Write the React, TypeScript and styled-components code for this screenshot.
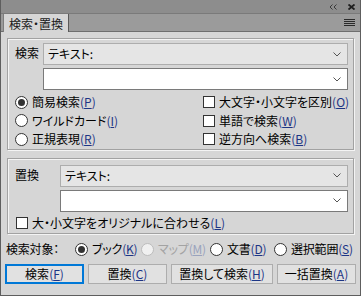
import React from "react";
import styled, { createGlobalStyle } from "styled-components";

const GlobalStyle = createGlobalStyle`
  html, body {
    margin: 0;
    padding: 0;
    background: #d6d6d6;
  }
  body {
    font-family: "Noto Sans CJK JP", "Noto Sans", sans-serif;
    font-size: 12px;
    font-feature-settings: "palt";
    color: #000;
  }
`;

const Panel = styled.div`
  width: 361px;
  height: 296px;
  box-sizing: border-box;
  background: #d6d6d6;
  border-left: 1px solid #5e5e5e;
  border-right: 1px solid #5e5e5e;
  border-bottom: 1px solid #5e5e5e;
  display: flex;
  flex-direction: column;
  overflow: hidden;
`;

const TitleBar = styled.div`
  height: 13px;
  background: #8d8d8d;
  border-bottom: 1px solid #7a7a7a;
  display: flex;
  justify-content: flex-end;
  align-items: center;
  gap: 11px;
  padding-right: 5px;
`;

const TabStrip = styled.div`
  height: 17px;
  background: #9b9b9b;
  border-bottom: 1px solid #6e6e6e;
  display: flex;
  align-items: stretch;
  justify-content: space-between;
  padding: 0 5px 0 2px;
`;

const Tab = styled.div`
  width: 64px;
  margin-bottom: -1px;
  background: #d6d6d6;
  border-left: 1px solid #7d7d7d;
  border-right: 1px solid #5a5a5a;
  display: flex;
  align-items: center;
  justify-content: center;
  font-size: 12px;
  line-height: 17px;
  color: #1a1a1a;
  white-space: nowrap;
`;

const MenuButton = styled.div`
  display: flex;
  align-items: center;
`;

const Body = styled.div`
  padding: 6px 4px 0 4px;
  display: flex;
  flex-direction: column;
`;

const GroupBox = styled.div<{ $top: number; $pad: string }>`
  margin: ${(p) => p.$top}px 2px 0 2px;
  border: 1px solid #a2a2a2;
  box-shadow: inset 1px 1px 0 #f4f4f4, 1px 1px 0 #f4f4f4;
  padding: ${(p) => p.$pad};
`;

const FieldGrid = styled.div<{ $label: number }>`
  display: grid;
  grid-template-columns: ${(p) => p.$label}px 1fr;
  row-gap: 3px;
  padding-right: 5px;
`;

const GroupLabel = styled.div`
  padding-left: 7px;
  line-height: 18px;
  margin-top: 1px;
`;

const Field = styled.div<{ $white?: boolean }>`
  height: 22px;
  box-sizing: border-box;
  border: 1px solid ${(p) => (p.$white ? "#7a7a7a" : "#adadad")};
  background: ${(p) => (p.$white ? "#ffffff" : "#e5e5e5")};
  display: flex;
  align-items: center;
  justify-content: space-between;
  padding: 0 6px 0 4px;
  line-height: 20px;
`;

const Options = styled.div`
  display: grid;
  grid-template-columns: 188px 1fr;
  grid-auto-flow: column;
  grid-template-rows: repeat(3, 18.5px);
  margin-top: 3px;
  padding-left: 7px;
`;

const SingleOption = styled.div`
  display: flex;
  margin-top: 2px;
  padding-left: 8px;
`;

const OptionRow = styled.label<{ $disabled?: boolean }>`
  display: flex;
  align-items: center;
  gap: 4px;
  height: 18.5px;
  white-space: nowrap;
  line-height: 18px;
  color: ${(p) => (p.$disabled ? "#a3a3a3" : "#000")};
`;

const RadioMark = styled.span<{ $checked?: boolean; $disabled?: boolean }>`
  width: 13px;
  height: 13px;
  box-sizing: border-box;
  border-radius: 50%;
  border: 1px solid ${(p) => (p.$disabled ? "#bcbcbc" : "#333")};
  background: ${(p) => (p.$disabled ? "#f0f0f0" : "#fff")};
  display: flex;
  align-items: center;
  justify-content: center;
  flex: none;

  &::after {
    content: "";
    width: 7px;
    height: 7px;
    border-radius: 50%;
    background: #333;
    display: ${(p) => (p.$checked ? "block" : "none")};
  }
`;

const CheckMark = styled.span`
  width: 12px;
  height: 12px;
  box-sizing: border-box;
  border: 1px solid #333;
  background: #fff;
  flex: none;
`;

const Key = styled.span<{ $disabled?: boolean }>`
  color: ${(p) => (p.$disabled ? "#9aa3bd" : "#1d3585")};
  u {
    text-underline-offset: 1px;
  }
`;

const TargetRow = styled.div`
  display: grid;
  grid-template-columns: 70px 66px 69px 64px auto;
  align-items: center;
  height: 18px;
  margin-top: 6px;
  letter-spacing: -0.2px;
`;

const TargetLabel = styled.div`
  margin-left: 1px;
  line-height: 18px;
  white-space: nowrap;
`;

const ButtonRow = styled.div`
  display: grid;
  grid-template-columns: 79px 79px 102px 79px;
  column-gap: 4px;
  margin-top: 6px;
`;

const ActionButton = styled.div<{ $focused?: boolean }>`
  height: 20px;
  box-sizing: border-box;
  background: #e1e1e1;
  border: ${(p) => (p.$focused ? "2px solid #0078d7" : "1px solid #adadad")};
  display: flex;
  align-items: center;
  justify-content: center;
  line-height: 18px;
  white-space: nowrap;
`;

const Chevron = () => (
  <svg width="8" height="5" viewBox="0 0 8 5">
    <path d="M0.5 0.5 L4 4 L7.5 0.5" fill="none" stroke="#555" strokeWidth="1" />
  </svg>
);

const Mn = ({ k, disabled }: { k: string; disabled?: boolean }) => (
  <Key $disabled={disabled}>
    (<u>{k}</u>)
  </Key>
);

const Radio = ({
  label,
  k,
  checked,
  disabled,
}: {
  label: string;
  k: string;
  checked?: boolean;
  disabled?: boolean;
}) => (
  <OptionRow $disabled={disabled}>
    <RadioMark $checked={checked} $disabled={disabled} />
    <span>
      {label}
      <Mn k={k} disabled={disabled} />
    </span>
  </OptionRow>
);

const Check = ({ label, k }: { label: string; k: string }) => (
  <OptionRow>
    <CheckMark />
    <span>
      {label}
      <Mn k={k} />
    </span>
  </OptionRow>
);

const App = () => {
  return (
    <>
      <GlobalStyle />
      <Panel>
        <TitleBar>
          <svg width="8" height="6" viewBox="0 0 8 6">
            <path d="M3.5 0.5 L1 3 L3.5 5.5 M7.5 0.5 L5 3 L7.5 5.5" fill="none" stroke="#3a3a3a" strokeWidth="1" />
          </svg>
          <svg width="7" height="6" viewBox="0 0 7 6">
            <path d="M0.5 0.5 L6.5 5.5 M6.5 0.5 L0.5 5.5" fill="none" stroke="#1e1e1e" strokeWidth="1.8" />
          </svg>
        </TitleBar>
        <TabStrip>
          <Tab>検索・置換</Tab>
          <MenuButton>
            <svg width="11" height="8" viewBox="0 0 11 8">
              <path d="M0 0.5 H11 M0 2.5 H11 M0 4.5 H11 M0 6.5 H11" stroke="#2a2a2a" strokeWidth="1" />
            </svg>
          </MenuButton>
        </TabStrip>
        <Body>
          <GroupBox $top={0} $pad="4px 0 0 0">
            <FieldGrid $label={35}>
              <GroupLabel>検索</GroupLabel>
              <Field>
                <span>テキスト:</span>
                <Chevron />
              </Field>
              <span />
              <Field $white>
                <span />
                <Chevron />
              </Field>
            </FieldGrid>
            <Options>
              <Radio label="簡易検索" k="P" checked />
              <Radio label="ワイルドカード" k="I" />
              <Radio label="正規表現" k="R" />
              <Check label="大文字・小文字を区別" k="O" />
              <Check label="単語で検索" k="W" />
              <Check label="逆方向へ検索" k="B" />
            </Options>
          </GroupBox>
          <GroupBox $top={8} $pad="6px 0 1px 0">
            <FieldGrid $label={52}>
              <GroupLabel>置換</GroupLabel>
              <Field>
                <span>テキスト:</span>
                <Chevron />
              </Field>
              <span />
              <Field $white>
                <span />
                <Chevron />
              </Field>
            </FieldGrid>
            <SingleOption>
              <Check label="大・小文字をオリジナルに合わせる" k="L" />
            </SingleOption>
          </GroupBox>
          <TargetRow>
            <TargetLabel>検索対象：</TargetLabel>
            <Radio label="ブック" k="K" checked />
            <Radio label="マップ" k="M" disabled />
            <Radio label="文書" k="D" />
            <Radio label="選択範囲" k="S" />
          </TargetRow>
          <ButtonRow>
            <ActionButton $focused>
              検索<Mn k="F" />
            </ActionButton>
            <ActionButton>
              置換<Mn k="C" />
            </ActionButton>
            <ActionButton>
              置換して検索<Mn k="H" />
            </ActionButton>
            <ActionButton>
              一括置換<Mn k="A" />
            </ActionButton>
          </ButtonRow>
        </Body>
      </Panel>
    </>
  );
};

export default App;
